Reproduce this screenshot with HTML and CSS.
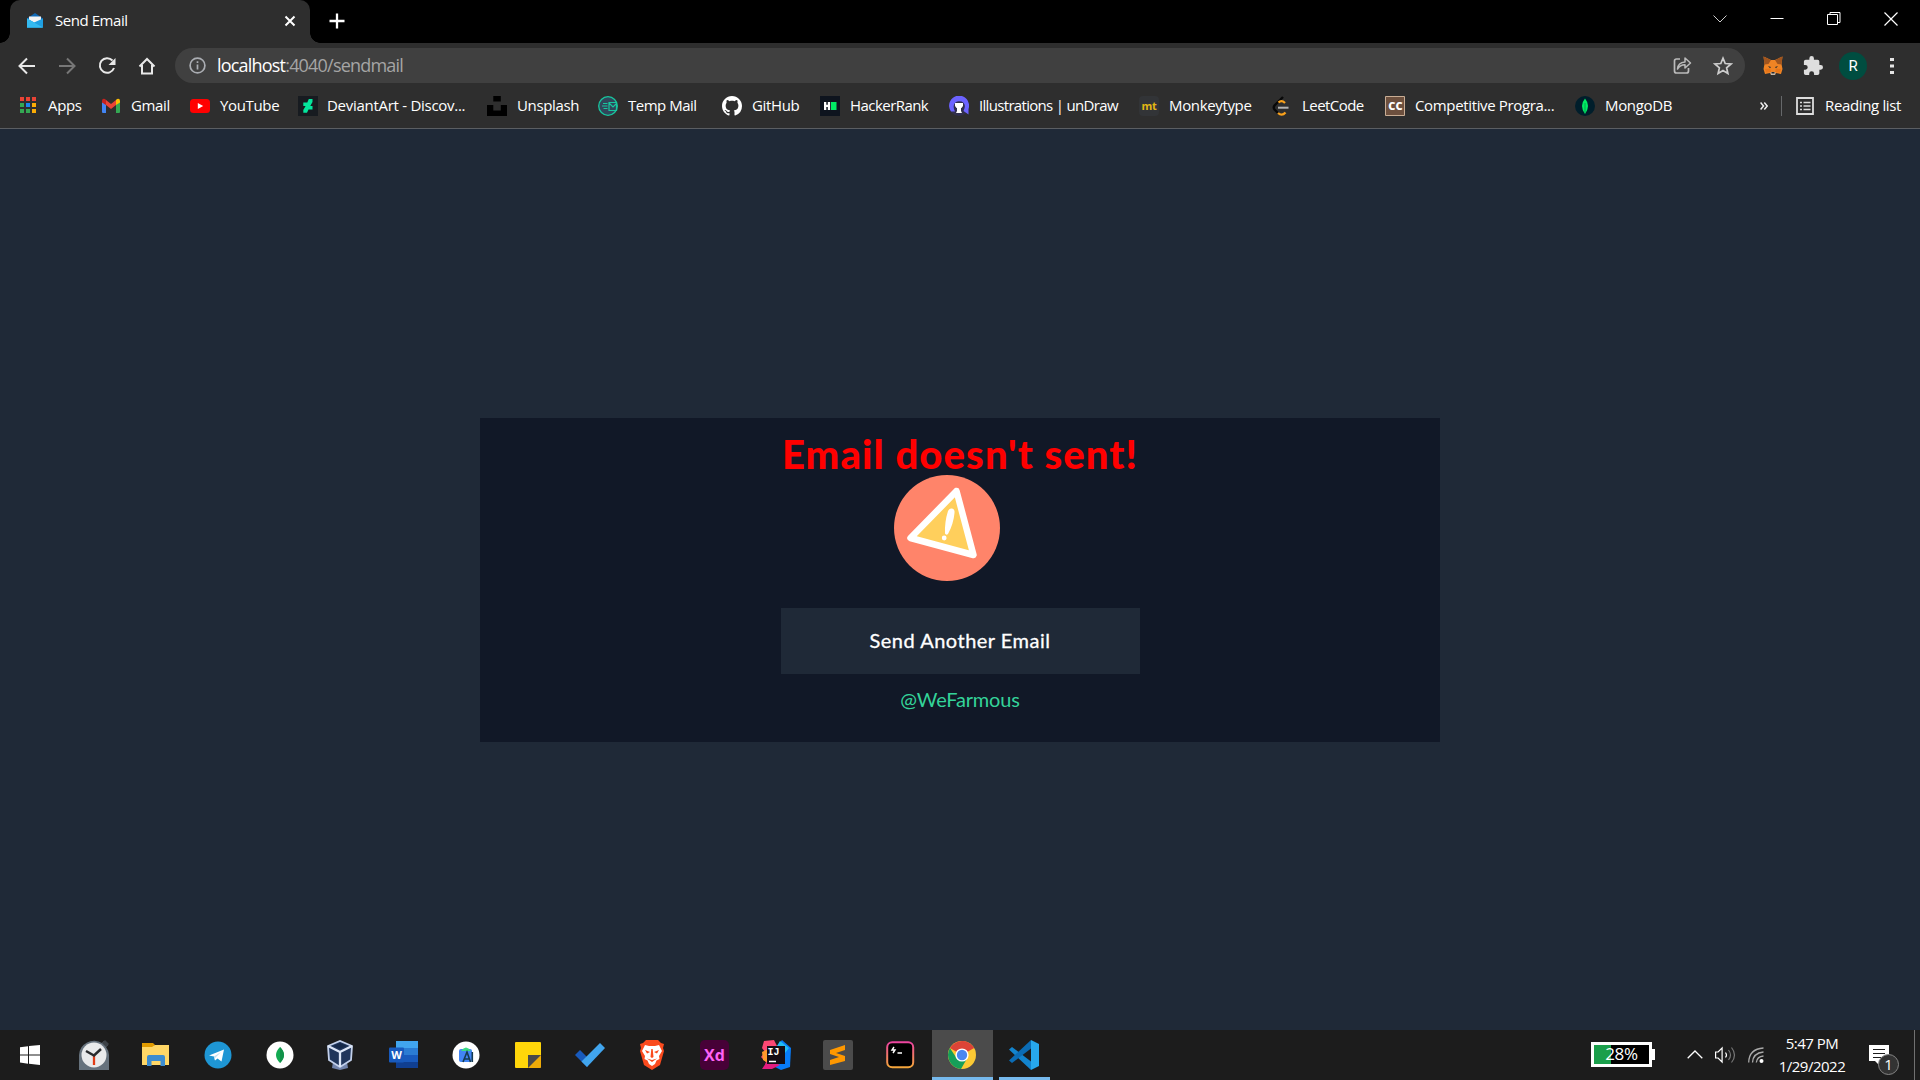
FILE: index.html
```html
<!DOCTYPE html>
<html lang="en">
<head>
<meta charset="utf-8">
<title>Send Email</title>
<link rel="stylesheet" href="styles.css">
</head>
<body>
<div class="screen">
<header class="tabstrip">
  <div class="tab">
    <svg class="tab-icon" width="16" height="16" viewBox="0 0 16 16"><path d="M0 5.500 8 0l8 5.500V9H0z" fill="#0f68b5"/><path d="M2 3.500h12V9l-6 3-6-3z" fill="#f3f3f3"/><path d="M0 5.500 16 14.500H0z" fill="#31b4ee"/><path d="M0 5.500 7 9.500 16 5.500v9H0z" fill="#1f9fe2"/><path d="M0 5.500v9h16z" fill="#34baf0"/></svg>
    <span class="tab-title">Send Email</span>
    <svg class="tab-close" width="12" height="12" viewBox="0 0 12 12"><path d="M1.500 1.500l9 9M10.500 1.500l-9 9" stroke="#fff" stroke-width="2"/></svg>
  </div>
  <svg class="new-tab" width="16" height="16" viewBox="0 0 16 16"><path d="M8 .5v15M.5 8h15" stroke="#fff" stroke-width="2.300"/></svg>
  <div class="window-controls">
    <svg width="14" height="14" viewBox="0 0 14 14"><path d="M.5 3.500 7 10l6.500-6.500" fill="none" stroke="#ccc"/></svg>
    <svg width="14" height="14" viewBox="0 0 14 14"><path d="M.5 6.500h13" stroke="#fff"/></svg>
    <svg width="14" height="14" viewBox="0 0 14 14"><path d="M.5 2.500h10v10H.500zM3 2V.500h10v10H11" fill="none" stroke="#fff"/></svg>
    <svg width="14" height="14" viewBox="0 0 14 14"><path d="M.5.5l13 13M13.500.5l-13 13" stroke="#fff" stroke-width="1.200"/></svg>
  </div>
</header>

<nav class="toolbar">
  <div class="nav-buttons">
    <svg width="20" height="20" viewBox="0 0 20 20"><path d="M18 10H3M10 2.500 2.500 10l7.500 7.500" fill="none" stroke="#e8e8e8" stroke-width="2"/></svg>
    <svg width="20" height="20" viewBox="0 0 20 20"><path d="M2 10h15M10 2.500l7.500 7.500-7.500 7.500" fill="none" stroke="#777" stroke-width="2"/></svg>
    <svg width="20" height="20" viewBox="0 0 20 20"><path d="M15.500 4.500A7.300 7.300 0 1 0 17 12" fill="none" stroke="#e8e8e8" stroke-width="2"/><path d="M18.500 2v7h-7z" fill="#e8e8e8"/></svg>
    <svg width="20" height="20" viewBox="0 0 20 20"><path d="M2.500 10.500 10 3l7.500 7.500M5 9v8.500h10V9" fill="none" stroke="#e8e8e8" stroke-width="2"/></svg>
  </div>
  <div class="omnibox">
    <svg width="17" height="17" viewBox="0 0 17 17"><circle cx="8.500" cy="8.500" r="7.400" fill="none" stroke="#aaadb2" stroke-width="1.700"/><path d="M8.500 7.400v5M8.500 4.200V6" stroke="#aaadb2" stroke-width="1.700"/></svg>
    <span class="url"><b>localhost</b>:4040/sendmail</span>
    <svg class="share" width="19" height="19" viewBox="0 0 19 19"><path d="M7 3H3.500Q1.500 3 1.500 5v10q0 2 2 2h10q2 0 2-2v-3" fill="none" stroke="#bbb" stroke-width="1.700"/><path d="M4.500 13Q5 6.500 12 6V2l5.500 5-5.500 5V8.800Q7 9 4.500 13z" fill="none" stroke="#bbb" stroke-width="1.500" stroke-linejoin="round"/></svg>
    <svg class="star" width="20" height="20" viewBox="0 0 20 20"><path d="M10 2.200l2.200 5.300 5.800.5-4.400 3.800 1.300 5.700-4.900-3-4.900 3 1.300-5.700L2 8l5.800-.5z" fill="none" stroke="#ccc" stroke-width="1.700"/></svg>
  </div>
  <div class="extensions">
    <svg width="20" height="20" viewBox="0 0 20 20"><path d="M.5.5 8 4h4l7.500-3.500L18.500 8l1 5-1.500 5-5-1-1 2H8l-1-2-5 1L.5 13l1-5z" fill="#f08424"/><path d="M.5.5 8 4 5.500 8 1.500 8.500zM19.500.5 12 4l2.500 4 4 .5z" fill="#a0551f"/><path d="M7.500 16h5l-.5 3H8z" fill="#c7b9a9"/><path d="M8.500 16h3v1.500h-3zM5 10l3 1-1 1.200zM15 10l-3 1 1 1.200z" fill="#252b34"/><path d="M2 13l5-.5L8 16l-5 .5zM18 13l-5-.5-1 3.500 5 .500z" fill="#e67519"/></svg>
    <svg width="20" height="20" viewBox="0 0 22 22"><path d="M20.500 11H19V7a2 2 0 0 0-2-2h-4V3.500a2.500 2.500 0 0 0-5 0V5H4a2 2 0 0 0-2 2v3.800h1.500a2.700 2.700 0 0 1 0 5.400H2V20a2 2 0 0 0 2 2h3.800v-1.500a2.700 2.700 0 0 1 5.400 0V22H17a2 2 0 0 0 2-2v-4h1.500a2.500 2.500 0 0 0 0-5z" transform="translate(-1 -1)" fill="#dedede"/></svg>
    <span class="avatar">R</span>
    <svg class="kebab" width="4" height="18" viewBox="0 0 4 18"><path d="M0 1h4v3H0zM0 7.500h4v3H0zM0 14h4v3H0z" fill="#e4e4e4"/></svg>
  </div>
</nav>

<nav class="bookmarks">
  <a class="bm apps"><svg viewBox="0 0 20 20"><path d="M2 1h4v4H2zM8 1h4v4H8zM14 1h4v4h-4z" fill="#ea4335"/><path d="M2 7h4v4H2zM2 13h4v4H2zM8 13h4v4H8z" fill="#34a853"/><path d="M8 7h4v4H8z" fill="#1a86f0"/><path d="M14 7h4v4h-4zM14 13h4v4h-4z" fill="#fbac05"/></svg><span>Apps</span></a>
  <a class="bm gmail"><svg viewBox="0 0 20 20"><path d="M1 5.500l4 3V17H2q-1 0-1-1z" fill="#4285f4"/><path d="M19 5.500l-4 3V17h3q1 0 1-1z" fill="#34a853"/><path d="M5 4l5 4 5-4v5l-5 4-5-4z" fill="#ea4335"/><path d="M1 5q0-3 3-2l1 1v5L1 6.500z" fill="#c5221f"/><path d="M19 5q0-3-3-2l-1 1v5l4-2.500z" fill="#fbbc04"/></svg><span>Gmail</span></a>
  <a class="bm youtube"><svg viewBox="0 0 20 20"><rect y="3" width="20" height="14" rx="3.500" fill="#f00"/><path d="M7.800 7l5.400 3-5.400 3z" fill="#fff"/></svg><span>YouTube</span></a>
  <a class="bm deviant"><svg viewBox="0 0 20 20"><path d="M0 0h20v20H0z" fill="#171b20"/><path d="M14.500 3v3l-2.200 4h2.200v3.500H10.500L9 16.800H5.300V14l2.300-4H5.300V6.500h4L10.800 3z" fill="#05e59c"/></svg><span>DeviantArt - Discov...</span></a>
  <a class="bm unsplash"><svg viewBox="0 0 20 20"><path d="M6.300 0h7.500v5.500H6.300zM0 9h6.300v5.500h7.500V9H20v11H0z"/></svg><span>Unsplash</span></a>
  <a class="bm temp"><svg viewBox="0 0 20 20"><circle cx="10" cy="10" r="9.300" fill="#31465a" stroke="#18c69e" stroke-width="1.300"/><path d="M11 6.500h7.500v8H11zM11 7l4 4 4-4M5 7.500h4.500M4 10h5.500M5.500 12.500h4" fill="none" stroke="#18c69e" stroke-width="1.200"/></svg><span>Temp Mail</span></a>
  <a class="bm github"><svg viewBox="0 0 16 16"><path fill="#fff" d="M8 0C3.580 0 0 3.580 0 8c0 3.540 2.290 6.530 5.470 7.590.4.070.55-.17.55-.38 0-.19-.01-.82-.01-1.490-2.010.37-2.530-.49-2.690-.94-.09-.23-.48-.94-.82-1.130-.28-.15-.68-.52-.01-.53.63-.01 1.080.58 1.230.82.72 1.210 1.870.87 2.330.66.07-.52.28-.87.51-1.070-1.780-.2-3.640-.89-3.640-3.950 0-.87.31-1.590.82-2.150-.08-.2-.36-1.020.08-2.120 0 0 .67-.21 2.200.82.64-.18 1.320-.27 2-.27s1.360.09 2 .27c1.530-1.040 2.200-.82 2.200-.82.44 1.100.16 1.920.08 2.120.51.56.82 1.270.82 2.150 0 3.070-1.870 3.750-3.650 3.950.29.25.54.73.54 1.480 0 1.070-.01 1.930-.01 2.200 0 .21.15.46.55.38A8.010 8.010 0 0 0 16 8c0-4.420-3.580-8-8-8z"/></svg><span>GitHub</span></a>
  <a class="bm hacker"><svg viewBox="0 0 20 20"><path d="M0 0h20v20H0z" fill="#0e141e"/><path d="M4 6h2.300v2.700h1.500V6h2.300v8H7.800v-3H6.300v3H4z" fill="#fff"/><path d="M11 6h5.500v8H11z" fill="#00ea64"/></svg><span>HackerRank</span></a>
  <a class="bm undraw"><svg viewBox="0 0 20 20"><circle cx="10" cy="10" r="10" fill="#302f4d"/><path d="M2 15.500A10 10 0 1 1 19.500 13v5.500l-5-3.500Q18 8 12.500 5.500 7 4 5 8.500q-1 4 1 7z" fill="#6c63ff"/><path d="M6 7h8v3l-1.500 2H12v3l1 2H7l1-2v-3h-.5L6 10z" fill="#fff"/></svg><span>Illustrations | unDraw</span></a>
  <a class="bm monkey"><svg viewBox="0 0 20 20"><rect width="20" height="20" rx="4" fill="#323437"/><text x="10" y="14" text-anchor="middle" class="mt">mt</text></svg><span>Monkeytype</span></a>
  <a class="bm leet"><svg viewBox="0 0 20 20"><path d="M11 1 2.500 9.500q-1.500 2 0 4L6 17" fill="none" stroke="#080808" stroke-width="2.400"/><path d="M6.500 6.500q3-3 6.500.5M6 17q4 3.500 7.500-.500" fill="none" stroke="#f9a11b" stroke-width="2.300"/><path d="M6 11.700H16.500" stroke="#b3b3b3" stroke-width="2"/></svg><span>LeetCode</span></a>
  <a class="bm cc"><svg viewBox="0 0 20 20"><path d="M.5.5h19v19H.500z" fill="#6d503e" stroke="#c9ad94"/><text x="10.500" y="14" text-anchor="middle" class="cctext">CC</text></svg><span>Competitive Progra...</span></a>
  <a class="bm mongo"><svg viewBox="0 0 20 20"><circle cx="10" cy="10" r="10" fill="#001e2b"/><path d="M10 2.500q6 7 0 15.500-6-8.500 0-15.500z" fill="#00ed64"/><path d="M10 7v10" stroke="#00a650"/></svg><span>MongoDB</span></a>
  <div class="bm-end">
    <svg width="8" height="8" viewBox="0 0 8 8"><path d="M.6.600 3.500 4 .6 7.400M4.300.600 7.200 4 4.300 7.400" fill="none" stroke="#eee" stroke-width="1.500"/></svg>
    <i class="divider"></i>
    <a class="bm reading"><svg viewBox="0 0 18 18"><path d="M1 1h16v16H1z" fill="none" stroke="#ddd" stroke-width="1.800"/><path d="M4 5.500h2M7.500 5.500h7M4 9h2M7.500 9h7M4 12.500h2M7.500 12.500h7" stroke="#ddd" stroke-width="1.700"/></svg><span>Reading list</span></a>
  </div>
</nav>

<main class="page">
  <section class="card">
    <h1>Email doesn't sent!</h1>
    <svg class="alert" width="108" height="108" viewBox="0 0 108 108"><circle cx="54" cy="54" r="53" fill="#ff846a"/><path d="M63.500 17 17.500 64 80.500 81z" fill="#ffcf5c" stroke="#fff" stroke-width="6.500" stroke-linejoin="round"/><path d="M55 37q1-3 4-2.500 3 .8 2.500 4.500-1 11-6.500 21-2 1.500-3-.5Q51.500 48 55 37z" fill="#fff"/><circle cx="51.200" cy="64" r="2.400" fill="#fff"/></svg>
    <a class="button">Send Another Email</a>
    <a class="handle">@WeFarmous</a>
  </section>
</main>

<footer class="taskbar">
  <div class="start"><svg width="20" height="20" viewBox="0 0 20 20"><path d="M0 2.300 8 1.200v8.300H0zM9 1.100 20 0v9.500H9zM0 10.500h8v8.200l-8-1.100zM9 10.500h11V20L9 18.800z" fill="#fff"/></svg></div>
  <div class="task"><svg viewBox="0 0 30 30"><path d="M0 15a15 15 0 0 1 23-12l2-2 4 4-2 2q3 4 3 8v15H0z" fill="#66727d"/><path d="m23 3 3-3 4 4-3 3z" fill="#3c4146"/><circle cx="15" cy="15" r="12.500" fill="#e9eaeb"/><path d="M15 15v10" stroke="#e23c16" stroke-width="2.300"/><path d="M7 11l8 4.500L22 9" fill="none" stroke="#292b2d" stroke-width="2.500"/></svg></div>
  <div class="task"><svg viewBox="0 0 30 30"><path d="M1 3h11l2 2-2 4H1z" fill="#e19b00"/><path d="M1 7h10l3-2h14v20H1z" fill="#ffd766"/><path d="M6 26V17q0-2 2-2h14q2 0 2 2v9h-4.500v-5h-9v5z" fill="#3c8ccf"/></svg></div>
  <div class="task"><svg viewBox="0 0 30 30"><circle cx="15" cy="15" r="13.500" fill="#1e96d4"/><path d="M6 15.500 21 9.500l-2.500 12-4-3-2.500 2-1-4z" fill="#fff"/><path d="m11 16.500 7-4.500-6 6v2.500z" fill="#bfdff2"/></svg></div>
  <div class="task"><svg viewBox="0 0 30 30"><circle cx="15" cy="15" r="13.500" fill="#fff"/><path d="M15 7q8 8 0 16-8-8 0-16z" fill="#13aa52"/><path d="M15 7q8 8 0 16z" fill="#119149"/></svg></div>
  <div class="task vbox"><svg viewBox="0 0 30 30"><path d="M8 22h14l1 6-8 2-8-2z" fill="#7284ac"/><path d="M3 6 15 1l12 5-1 14-11 7L4 20z" fill="#20365c" stroke="#c2d0eb" stroke-width="1.800"/><path d="m3 6 12 6 12-6M15 12v15" fill="none" stroke="#dce6f7" stroke-width="2.300"/><path d="m8 6 7-3 7 3-7 3z" fill="#152849"/></svg></div>
  <div class="task"><svg viewBox="0 0 30 30"><path d="M7 1h22v7H7z" fill="#41a5ee"/><path d="M7 8h22v7H7z" fill="#2b7cd3"/><path d="M7 15h22v7H7z" fill="#185abd"/><path d="M7 22h22v6H7z" fill="#103f91"/><rect y="7.500" width="15" height="15" rx="1" fill="#185abd"/><text x="7.500" y="18.600" text-anchor="middle" class="word">W</text></svg></div>
  <div class="task"><svg viewBox="0 0 30 30"><circle cx="15" cy="15" r="13.500" fill="#fff"/><rect x="8" y="9" width="13" height="13" rx="2" fill="#4285f4"/><path d="M10 11q5-7 10 0z" fill="#3ddc84"/><path d="m12 22 4-10 3.500 10M13.500 19h5M21.300 12v10" fill="none" stroke="#153b50" stroke-width="1.600"/></svg></div>
  <div class="task"><svg viewBox="0 0 30 30"><rect x="2" y="2" width="26" height="26" rx="1" fill="#ffd60a"/><path d="M15 15h13v13H15z" fill="#494949"/><path d="m28 15-13 13h12q1 0 1-1z" fill="#efab08"/></svg></div>
  <div class="task"><svg viewBox="0 0 30 30"><path d="m0 15 5-5 11 11-4 6z" fill="#185abd"/><path d="M25 3l5 5-18 19-5.500-5.500z" fill="#41a5ee"/></svg></div>
  <div class="task"><svg viewBox="0 0 30 30"><path d="m9 0-3 3-3 1 1 4-1 3 4 14 8 5 8-5 4-14-1-3 1-4-3-1-3-3z" fill="#fa4a1d"/><path d="m8 5 4 1h6l4-1 3 6-3 5 .5 3-3 1.500L18 24l-3 2-3-2-1.500-3.500L7.500 19l.5-3-3-5z" fill="#fff"/><path d="m8 10 5 2-3 1.500zM22 10l-5 2 3 1.500zM14.300 9h1.400l.8 8-1.500 1-1.500-1zM10 18.500l5 1.500 5-1.500-5 3.500z" fill="#fa4a1d"/></svg></div>
  <div class="task"><svg viewBox="0 0 30 30"><rect x="1" width="29" height="30" rx="5" fill="#470137"/><text x="15.500" y="20.500" text-anchor="middle" class="xd">Xd</text></svg></div>
  <div class="task"><svg viewBox="0 0 30 30"><path d="M3 1 13 0l4 8-6 14-8 7 2-7-5-5 4-5-3-4z" fill="#fd4874"/><path d="m1 12 6-3v14l-5-3z" fill="#ff9a2c"/><path d="m16 6 5-6 9 8-1 19-9 3-8-4z" fill="#087cfa"/><path d="m16 6 3-5 9 7-4 5z" fill="#22bcf2"/><path d="M1 29 7 20l12 5-8 4z" fill="#e41c80"/><path d="M6 6h18v18H6z" fill="#140d14"/><text x="12.500" y="15" text-anchor="middle" class="ij">IJ</text><path d="M8 21.500h7" stroke="#fff" stroke-width="1.500"/></svg></div>
  <div class="task"><svg viewBox="0 0 30 30"><rect width="30" height="30" rx="2" fill="#4b4b4b"/><path d="m7 10 15-5v5l-9 3 9 3v5L7 25v-5l9-3-9-3z" fill="#ff9800"/></svg></div>
  <div class="task"><svg viewBox="0 0 30 30"><defs><linearGradient id="hy" x2="0" y2="1"><stop stop-color="#ec43a0"/><stop offset="1" stop-color="#f4a63a"/></linearGradient></defs><rect x="2.200" y="2.200" width="26" height="25" rx="5" fill="#000" stroke="url(#hy)" stroke-width="2"/><path d="M9 7 7 10h3l-2 3M12.500 13h4.500" fill="none" stroke="#fff" stroke-width="1.400"/></svg></div>
  <div class="task active"><svg viewBox="0 0 30 30"><circle cx="15" cy="15" r="14" fill="#fbc934"/><path d="M15 15 2.900 8A14 14 0 0 1 27.100 8z" fill="#dc4437"/><path d="M2.900 8A14 14 0 0 0 14 29l6-10.500-10.500-.5z" fill="#159f59"/><path d="M15 8h12.100q-5-7-12.100-7z" fill="#dc4437"/><circle cx="15" cy="15" r="6.600" fill="#fff"/><circle cx="15" cy="15" r="5.200" fill="#4a87f0"/></svg></div>
  <div class="task open"><svg viewBox="0 0 30 30"><path d="M0 9.500 3 7l19 14.500V30z" fill="#1384ce"/><path d="m0 20.500 3 2.500 19-14.500V0z" fill="#0b6cb5"/><path d="m22 0 8 4v22l-8 4z" fill="#27a8ed"/></svg></div>

  <div class="tray">
    <div class="battery"><span>28%</span></div>
    <svg class="chev" width="16" height="9" viewBox="0 0 16 9"><path d="M.7 8.300 8 1l7.300 7.300" fill="none" stroke="#fff" stroke-width="1.300"/></svg>
    <svg class="sound" width="21" height="18" viewBox="0 0 21 18"><path d="M.6 6h2.500l4-4v14l-4-4H.600z" fill="none" stroke="#fff" stroke-width="1.200"/><path d="M10.500 6.500q2 2.500 0 5" fill="none" stroke="#fff" stroke-width="1.200"/><path d="M13.500 4q4 5 0 10M16.500 1.500q6 7.500 0 15" fill="none" stroke="#777" stroke-width="1.200"/></svg>
    <svg class="wifi" width="16" height="16" viewBox="0 0 16 16"><path d="M.7 15.500Q1 2 15.500 1M4.500 15.500Q5 6 15.500 5M8.300 15.500Q9 9.500 15.500 9" fill="none" stroke="#aaa" stroke-width="1.300"/><circle cx="13.500" cy="14" r="2" fill="#fff"/></svg>
    <div class="clock"><span>5:47 PM</span><span class="date">1/29/2022</span></div>
    <div class="notice"><svg width="20" height="20" viewBox="0 0 20 20"><path d="M0 0h20v16H10v4l-4-4H0z" fill="#fff"/><path d="M4 4.500h12M4 8.500h12M4 12.500h8" stroke="#1c1c1c" stroke-width="1.200"/></svg><span class="badge">1</span></div>
    <i class="peek"></i>
  </div>
</footer>
</div>
</body>
</html>
```
FILE: styles.css
```css
* { box-sizing: border-box; }
body { margin: 0; background: #000; font-family: "Open Sans", "Noto Sans", sans-serif; color: #fff; }
svg { display: block; flex: none; }
.screen { width: 1920px; height: 1080px; display: flex; flex-direction: column; overflow: hidden; }

.tabstrip { height: 43px; display: flex; background: #000; }
.tab { position: relative; width: 300px; margin-left: 10px; padding: 0 14px 2px 17px; display: flex; align-items: center; background: #2e2e2e; border-radius: 10px 10px 0 0; }
.tab::before, .tab::after { content: ""; position: absolute; bottom: 0; width: 10px; height: 10px; }
.tab::before { left: -10px; background: radial-gradient(circle at 0 0, #000 9.500px, #2e2e2e 10px); }
.tab::after { right: -10px; background: radial-gradient(circle at 100% 0, #000 9.500px, #2e2e2e 10px); }
.tab-title { margin-left: 12px; padding-bottom: 2px; font-size: 15px; letter-spacing: -.45px; flex: 1; }
.new-tab { margin: 13px 0 0 19px; }
.window-controls { margin: 12px 22px 0 auto; display: flex; gap: 43px; }

.toolbar { height: 45px; display: flex; align-items: center; background: #2e2e2e; }
.nav-buttons { display: flex; gap: 20px; padding-left: 17px; width: 175px; }
.omnibox { width: 1570px; height: 35px; display: flex; align-items: center; padding: 0 12px 0 14px; border-radius: 18px; background: #404040; }
.url { margin-left: 11px; padding-bottom: 1px; flex: 1; font-size: 18px; letter-spacing: -.8px; color: #a5a5a5; }
.url b { font-weight: 400; color: #fff; }
.star { margin-left: 21px; }
.extensions { display: flex; align-items: center; padding-left: 18px; }
.extensions svg + svg { margin-left: 20px; }
.avatar { width: 28px; height: 28px; margin-left: 16px; border-radius: 50%; background: #004d40; font: 15px/28px Roboto, sans-serif; text-align: center; }
.extensions .kebab { margin-left: 23px; }

.bookmarks { height: 41px; display: flex; align-items: center; gap: 21px; padding: 0 18px 4px 18px; background: #2e2e2e; border-bottom: 1px solid #5b5e62; }
.bm { display: flex; align-items: center; gap: 10px; font-size: 15px; line-height: 20px; letter-spacing: -.35px; white-space: nowrap; }
.bm svg { width: 20px; height: 20px; }
.bm span { height: 22px; }
.apps span { width: 33px; }
.gmail { margin-left: -1px; }
.gmail span { width: 38px; }
.youtube span { width: 57px; }
.deviant span { width: 139px; letter-spacing: -.28px; }
.bm.deviant { gap: 9px; }
.unsplash span { width: 60px; }
.temp span { width: 73px; letter-spacing: -.5px; }
.github span { width: 47px; }
.hacker span { width: 78px; letter-spacing: -.55px; }
.undraw span { width: 139px; letter-spacing: -.68px; }
.monkey span { width: 82px; }
.leet span { width: 62px; letter-spacing: -.55px; }
.cc span { width: 139px; }
.mongo span { width: 66px; }
.mt { font: 700 11px "Open Sans", sans-serif; fill: #e2b714; letter-spacing: -.4px; }
.cctext { font: 800 11px "Open Sans", sans-serif; fill: #fff; letter-spacing: 0; }
.bm-end { margin-left: auto; display: flex; align-items: center; }
.divider { width: 1px; height: 20px; margin: 0 14px 0 13px; background: #66686a; }
.reading { gap: 11px; }
.reading svg { width: 18px; height: 18px; }
.reading span { width: 77px; }

.page { height: 901px; display: flex; align-items: flex-start; justify-content: center; padding-top: 289px; background: #1f2937; font-family: Lato, "Open Sans", sans-serif; }
.card { width: 960px; height: 324px; display: flex; flex-direction: column; align-items: center; background: #111827; }
h1 { margin: 14px 0 -2px; font-size: 40px; line-height: 44px; font-weight: 900; letter-spacing: 1.100px; color: #f00; white-space: nowrap; }
.alert { margin: 0 27px 0 0; }
.button { width: 359px; height: 66px; margin-top: 26px; padding-bottom: 1px; background: #1f2937; font-size: 20px; line-height: 65px; letter-spacing: .5px; text-align: center; -webkit-text-stroke: .3px #fff; }
.handle { margin-top: 11px; font-size: 20px; line-height: 28px; letter-spacing: -.2px; color: #34d399; }

.taskbar { height: 50px; display: flex; background: #1c1c1c; }
.start { width: 63px; padding: 15px 0 0 20px; }
.task { width: 62px; display: flex; justify-content: center; padding-top: 10px; }
.task svg { width: 30px; height: 30px; }
.vbox { padding-right: 4px; }
.active { background: #4b4b4b; border-bottom: 3px solid #76b9ed; width: 61px; padding-right: 2px; margin: 0 6px 0 1px; }
.open { width: 51px; padding-right: 2px; border-bottom: 3px solid #76b9ed; }
.word { font: 700 11px "Open Sans", sans-serif; fill: #fff; }
.xd { font: 700 16px "Open Sans", sans-serif; fill: #ff61f6; }
.ij { font: 700 10px "Liberation Mono", monospace; fill: #fff; }
.tray { margin-left: auto; display: flex; align-items: flex-start; }
.battery { position: relative; width: 61px; height: 25px; margin-top: 12px; border: 3px solid #fff; background: linear-gradient(90deg, #1a9f4b 17px, #000 17px); font-size: 17px; line-height: 18px; text-align: center; letter-spacing: -.3px; }
.battery::after { content: ""; position: absolute; right: -6px; top: 4px; width: 3px; height: 11px; background: #fff; }
.chev { margin: 20px 0 0 35px; }
.sound { margin: 16px 0 0 12px; }
.wifi { margin: 17px 0 0 12px; }
.clock { width: 68px; margin: 2px 0 0 14px; display: flex; flex-direction: column; align-items: center; font-size: 15px; line-height: 23px; letter-spacing: -.5px; white-space: nowrap; }
.notice { position: relative; margin: 15px 0 0 23px; }
.badge { position: absolute; left: 9px; top: 9px; width: 21px; height: 21px; border: 1px solid #858585; border-radius: 50%; background: #333; font-size: 15px; line-height: 18px; text-align: center; }
.peek { width: 1px; height: 50px; margin: 0 5px 0 25px; background: #707070; }
```
